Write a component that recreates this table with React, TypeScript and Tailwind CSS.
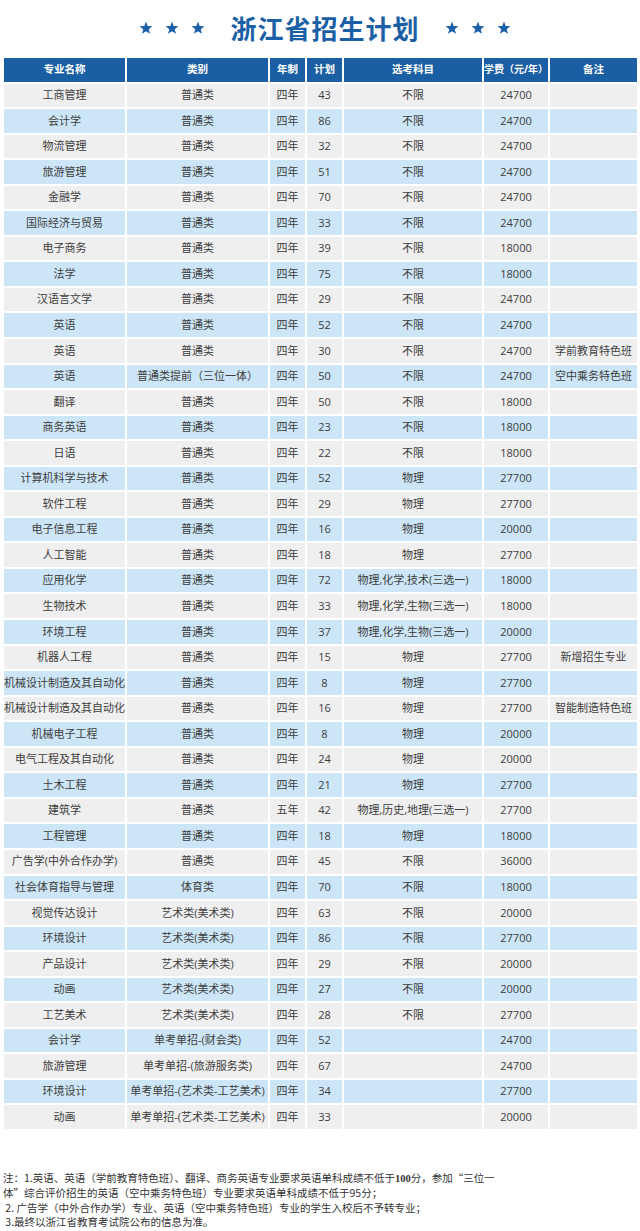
import React from 'react';

type Row = [string, string, string, string, string, string, string?];

const rows: Row[] = [
  ['工商管理', '普通类', '四年', '43', '不限', '24700'],
  ['会计学', '普通类', '四年', '86', '不限', '24700'],
  ['物流管理', '普通类', '四年', '32', '不限', '24700'],
  ['旅游管理', '普通类', '四年', '51', '不限', '24700'],
  ['金融学', '普通类', '四年', '70', '不限', '24700'],
  ['国际经济与贸易', '普通类', '四年', '33', '不限', '24700'],
  ['电子商务', '普通类', '四年', '39', '不限', '18000'],
  ['法学', '普通类', '四年', '75', '不限', '18000'],
  ['汉语言文学', '普通类', '四年', '29', '不限', '24700'],
  ['英语', '普通类', '四年', '52', '不限', '24700'],
  ['英语', '普通类', '四年', '30', '不限', '24700', '学前教育特色班'],
  ['英语', '普通类提前（三位一体）', '四年', '50', '不限', '24700', '空中乘务特色班'],
  ['翻译', '普通类', '四年', '50', '不限', '18000'],
  ['商务英语', '普通类', '四年', '23', '不限', '18000'],
  ['日语', '普通类', '四年', '22', '不限', '18000'],
  ['计算机科学与技术', '普通类', '四年', '52', '物理', '27700'],
  ['软件工程', '普通类', '四年', '29', '物理', '27700'],
  ['电子信息工程', '普通类', '四年', '16', '物理', '20000'],
  ['人工智能', '普通类', '四年', '18', '物理', '27700'],
  ['应用化学', '普通类', '四年', '72', '物理,化学,技术(三选一)', '18000'],
  ['生物技术', '普通类', '四年', '33', '物理,化学,生物(三选一)', '18000'],
  ['环境工程', '普通类', '四年', '37', '物理,化学,生物(三选一)', '20000'],
  ['机器人工程', '普通类', '四年', '15', '物理', '27700', '新增招生专业'],
  ['机械设计制造及其自动化', '普通类', '四年', '8', '物理', '27700'],
  ['机械设计制造及其自动化', '普通类', '四年', '16', '物理', '27700', '智能制造特色班'],
  ['机械电子工程', '普通类', '四年', '8', '物理', '20000'],
  ['电气工程及其自动化', '普通类', '四年', '24', '物理', '20000'],
  ['土木工程', '普通类', '四年', '21', '物理', '27700'],
  ['建筑学', '普通类', '五年', '42', '物理,历史,地理(三选一)', '27700'],
  ['工程管理', '普通类', '四年', '18', '物理', '18000'],
  ['广告学(中外合作办学)', '普通类', '四年', '45', '不限', '36000'],
  ['社会体育指导与管理', '体育类', '四年', '70', '不限', '18000'],
  ['视觉传达设计', '艺术类(美术类)', '四年', '63', '不限', '20000'],
  ['环境设计', '艺术类(美术类)', '四年', '86', '不限', '27700'],
  ['产品设计', '艺术类(美术类)', '四年', '29', '不限', '20000'],
  ['动画', '艺术类(美术类)', '四年', '27', '不限', '20000'],
  ['工艺美术', '艺术类(美术类)', '四年', '28', '不限', '27700'],
  ['会计学', '单考单招-(财会类)', '四年', '52', '', '24700'],
  ['旅游管理', '单考单招-(旅游服务类)', '四年', '67', '', '24700'],
  ['环境设计', '单考单招-(艺术类-工艺美术)', '四年', '34', '', '27700'],
  ['动画', '单考单招-(艺术类-工艺美术)', '四年', '33', '', '20000'],
];

const headers = ['专业名称', '类别', '年制', '计划', '选考科目', '学费（元/年）', '备注'];

function Stars() {
  return (
    <div className="flex items-center gap-[12px]">
      {[0, 1, 2].map((i) => (
        <svg key={i} width="14" height="14" viewBox="0 0 24 24">
          <polygon
            points="12,1 14.9,8.6 23,9 16.7,14.1 18.8,22 12,17.5 5.2,22 7.3,14.1 1,9 9.1,8.6"
            fill="#1b5fa6"
          />
        </svg>
      ))}
    </div>
  );
}

export default function App() {
  return (
    <div
      className="w-[640px] bg-white pb-[6px]"
      style={{ fontFamily: '"Open Sans", "Noto Sans CJK SC", sans-serif' }}
    >
      <div className="h-[56px] pl-[10px] flex items-center justify-center gap-[25px]">
        <Stars />
        <div
          className="text-[26px] font-bold text-[#1b5fa6] tracking-[1px] leading-none"
          style={{ fontFamily: '"Noto Sans CJK SC", sans-serif' }}
        >
          浙江省招生计划
        </div>
        <Stars />
      </div>

      <div className="mt-[2px] ml-[4px] grid grid-cols-[121px_141px_35px_35px_138px_64px_87px] gap-[2px] auto-rows-[23.55px]">
        {headers.map((h) => (
          <div
            key={h}
            className={`bg-[#1a5ea3] text-white ${h.length > 5 ? 'text-[10px]' : 'text-[10.5px]'} font-bold flex items-center justify-center whitespace-nowrap overflow-hidden`}
          >
            {h}
          </div>
        ))}
        {rows.map((r, i) => {
          const bg = i % 2 === 0 ? 'bg-[#efefef]' : 'bg-[#cde6f7]';
          return [0, 1, 2, 3, 4, 5, 6].map((c) => (
            <div
              key={`${i}-${c}`}
              className={`${bg} text-[#3d3d3d] text-[11px] flex items-center justify-center whitespace-nowrap overflow-hidden`}
            >
              {r[c] || ''}
            </div>
          ));
        })}
      </div>

      <div
        className="mt-[42px] pl-[3px] text-[10.5px] leading-[14.5px] text-[#333] whitespace-pre"
        style={{ fontFamily: '"Noto Sans CJK SC", sans-serif' }}
      >
        <div>注：1.英语、英语（学前教育特色班）、翻译、商务英语专业要求英语单科成绩不低于<span className="font-bold" style={{ fontFamily: '"Liberation Serif", serif' }}>100</span>分，参加“三位一</div>
        <div>体”综合评价招生的英语（空中乘务特色班）专业要求英语单科成绩不低于95分；</div>
        <div> 2. 广告学（中外合作办学）专业、英语（空中乘务特色班）专业的学生入校后不予转专业；</div>
        <div> 3.最终以浙江省教育考试院公布的信息为准。</div>
      </div>
    </div>
  );
}
